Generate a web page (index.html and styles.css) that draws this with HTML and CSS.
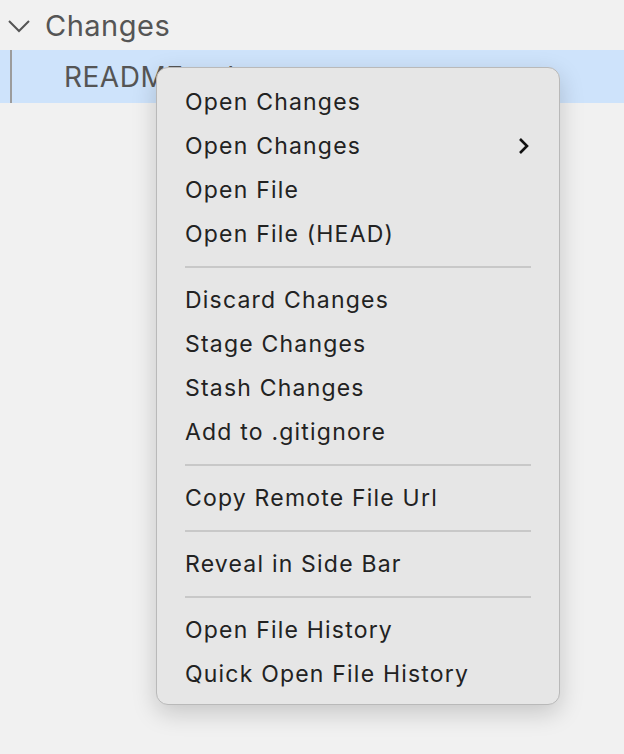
FILE: index.html
```html
<!DOCTYPE html>
<html lang="en">
<head>
  <meta charset="UTF-8" />
  <title>Source Control - Context Menu</title>
  <link rel="stylesheet" href="styles.css">
</head>
<body>

  <div class="sidebar">
    <div class="section-header">
      <svg class="twistie" width="24" height="14" viewBox="0 0 24 14">
        <path d="M2 2 L12 12 L22 2" fill="none" stroke="#555" stroke-width="2" />
      </svg>
      <span>Changes</span>
    </div>
    <div class="file-row selected">
      <span class="indent-guide"></span>
      <span class="file-name">README.md</span>
    </div>
  </div>

  <!-- context menu -->
  <div class="context-menu">
    <div class="menu-item">Open Changes</div>
    <div class="menu-item has-sub">Open Changes
      <svg class="sub-arrow" width="12" height="18" viewBox="0 0 12 18">
        <path d="M2 2 L9 9 L2 16" fill="none" stroke="#111" stroke-width="2.6" />
      </svg>
    </div>
    <div class="menu-item">Open File</div>
    <div class="menu-item">Open File (HEAD)</div>
    <div class="separator"></div>
    <div class="menu-item">Discard Changes</div>
    <div class="menu-item">Stage Changes</div>
    <div class="menu-item">Stash Changes</div>
    <div class="menu-item">Add to .gitignore</div>
    <div class="separator"></div>
    <div class="menu-item">Copy Remote File Url</div>
    <div class="separator"></div>
    <div class="menu-item">Reveal in Side Bar</div>
    <div class="separator"></div>
    <div class="menu-item">Open File History</div>
    <div class="menu-item">Quick Open File History</div>
  </div>

</body>
</html>
```

FILE: styles.css
```css
:root {
  --bg-color: #f1f1f1;
  --side-text: #555555;
  --selected: #cee3fb;
  --menu-bg: #e6e6e6;
  --menu-text: #222222;
  --menu-border: #b9b9b9;
}

body {
  margin: 0;
  padding: 0;
  background-color: var(--bg-color);
  font-family: "Inter", "Noto Sans", sans-serif;
  width: 624px;
  height: 754px;
  overflow: hidden;
}

.sidebar {
  color: var(--side-text);
}

.section-header {
  height: 50px;
  display: flex;
  align-items: center;
  font-size: 29px;
  letter-spacing: 0.5px;
}

.twistie {
  margin-left: 7px;
  margin-right: 14px;
  margin-top: 2px;
}

.file-row {
  height: 53px;
  display: flex;
  align-items: center;
  font-size: 28px;
  letter-spacing: 0.5px;
}

.file-row.selected {
  background-color: var(--selected);
}

.indent-guide {
  width: 2px;
  height: 100%;
  margin-left: 10px;
  margin-right: 52px;
  background-color: #9c9c9c;
}

.context-menu {
  position: absolute;
  top: 67px;
  left: 156px;
  width: 402px;
  padding: 12px 0 8px;
  background-color: var(--menu-bg);
  border: 1px solid var(--menu-border);
  border-radius: 12px;
  box-shadow: 0 8px 24px rgba(0, 0, 0, 0.18);
  color: var(--menu-text);
  font-size: 23px;
  letter-spacing: 1.2px;
}

.menu-item {
  height: 44px;
  display: flex;
  align-items: center;
  justify-content: space-between;
  padding: 0 28px;
}

.sub-arrow {
  margin-right: 1px;
}

.separator {
  height: 2px;
  margin: 10px 28px;
  background-color: #c8c8c8;
}
```
